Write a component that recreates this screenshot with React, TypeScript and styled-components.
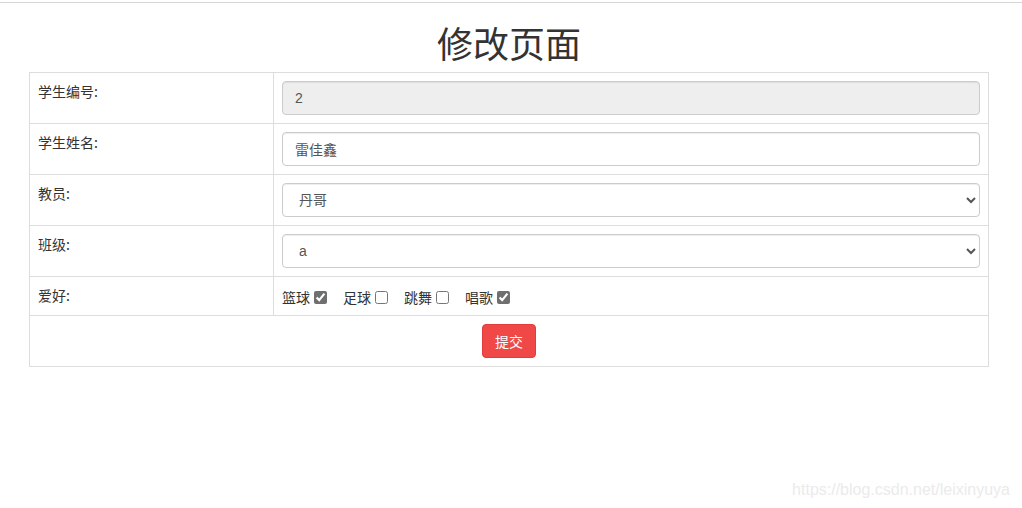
import React, { useState } from 'react';
import styled, { createGlobalStyle } from 'styled-components';

const GlobalStyle = createGlobalStyle`
  html, body {
    margin: 0;
    padding: 0;
    background: #fff;
    font-family: "Liberation Sans", "Noto Sans CJK SC", sans-serif;
    font-size: 14px;
    color: #333;
  }
`;

const Page = styled.div`
  position: relative;
  width: 1022px;
  height: 508px;
  overflow: hidden;
`;

const TopRule = styled.div`
  margin-top: 2px;
  height: 1px;
  background: #d6d6d6;
`;

const Title = styled.h1`
  margin: 19px 0 10px;
  font-size: 36px;
  font-weight: 400;
  line-height: 40px;
  text-align: center;
  padding-right: 4px;
  font-family: "Noto Sans CJK SC", sans-serif;
  color: #333;
`;

const Table = styled.table`
  margin-left: 29px;
  width: 960px;
  border-collapse: collapse;
  border: 1px solid #ddd;
`;

const LabelCell = styled.td`
  width: 227px;
  padding: 8px;
  border: 1px solid #ddd;
  vertical-align: top;
  font-size: 14px;
  line-height: 20px;
  font-family: "Noto Sans CJK SC", sans-serif;
  color: #333;
`;

const FieldCell = styled.td<{ $center?: boolean }>`
  padding: 8px;
  border: 1px solid #ddd;
  vertical-align: top;
  line-height: 20px;
  text-align: ${(p) => (p.$center ? 'center' : 'left')};
`;

const TextInput = styled.input`
  display: block;
  box-sizing: border-box;
  width: 100%;
  height: 34px;
  padding: 6px 12px;
  font-size: 14px;
  font-family: "Liberation Sans", "Noto Sans CJK SC", sans-serif;
  color: #555;
  border: 1px solid #ccc;
  border-radius: 4px;
  box-shadow: inset 0 1px 1px rgba(0, 0, 0, 0.075);
  background: #fff;
  outline: none;
  &:disabled {
    background: #eee;
  }
`;

const Select = styled.select`
  display: block;
  box-sizing: border-box;
  width: 100%;
  height: 34px;
  padding: 6px 12px;
  font-size: 14px;
  font-family: "Liberation Sans", "Noto Sans CJK SC", sans-serif;
  color: #555;
  border: 1px solid #ccc;
  border-radius: 4px;
  background: #fff;
  box-shadow: inset 0 1px 1px rgba(0, 0, 0, 0.075);
`;

const Hobbies = styled.div`
  display: flex;
  align-items: center;
  gap: 16px;
  padding-top: 2px;
  font-size: 14px;
  font-family: "Noto Sans CJK SC", sans-serif;
`;

const Hobby = styled.label`
  display: inline-flex;
  align-items: center;
  gap: 4px;
`;

const Check = styled.input`
  margin: 0;
  width: 13px;
  height: 13px;
  accent-color: #6f6f6f;
`;

const SubmitButton = styled.button`
  padding: 6px 12px;
  font-size: 14px;
  line-height: 20px;
  font-family: "Noto Sans CJK SC", sans-serif;
  color: #fff;
  background: #f04747;
  border: 1px solid #e23b3b;
  border-radius: 4px;
  cursor: pointer;
`;

const Watermark = styled.div`
  position: absolute;
  right: 12px;
  bottom: 9px;
  font-size: 16px;
  color: #ebebeb;
  font-family: "Liberation Sans", Arial, sans-serif;
`;

const hobbyList = [
  { name: '篮球', checked: true },
  { name: '足球', checked: false },
  { name: '跳舞', checked: false },
  { name: '唱歌', checked: true },
];

export default function App() {
  const [name, setName] = useState('雷佳鑫');
  const [hobbies, setHobbies] = useState(hobbyList);

  return (
    <Page>
      <GlobalStyle />
      <TopRule />
      <Title>修改页面</Title>
      <form onSubmit={(e) => e.preventDefault()}>
        <Table>
          <tbody>
            <tr>
              <LabelCell>学生编号:</LabelCell>
              <FieldCell>
                <TextInput value="2" disabled readOnly />
              </FieldCell>
            </tr>
            <tr>
              <LabelCell>学生姓名:</LabelCell>
              <FieldCell>
                <TextInput value={name} onChange={(e) => setName(e.target.value)} />
              </FieldCell>
            </tr>
            <tr>
              <LabelCell>教员:</LabelCell>
              <FieldCell>
                <Select defaultValue="丹哥">
                  <option>丹哥</option>
                </Select>
              </FieldCell>
            </tr>
            <tr>
              <LabelCell>班级:</LabelCell>
              <FieldCell>
                <Select defaultValue="a">
                  <option>a</option>
                </Select>
              </FieldCell>
            </tr>
            <tr>
              <LabelCell>爱好:</LabelCell>
              <FieldCell>
                <Hobbies>
                  {hobbies.map((h, i) => (
                    <Hobby key={h.name}>
                      {h.name}
                      <Check
                        type="checkbox"
                        checked={h.checked}
                        onChange={() =>
                          setHobbies(hobbies.map((x, j) => (j === i ? { ...x, checked: !x.checked } : x)))
                        }
                      />
                    </Hobby>
                  ))}
                </Hobbies>
              </FieldCell>
            </tr>
            <tr>
              <FieldCell colSpan={2} $center>
                <SubmitButton type="submit">提交</SubmitButton>
              </FieldCell>
            </tr>
          </tbody>
        </Table>
      </form>
      <Watermark>https://blog.csdn.net/leixinyuya</Watermark>
    </Page>
  );
}
